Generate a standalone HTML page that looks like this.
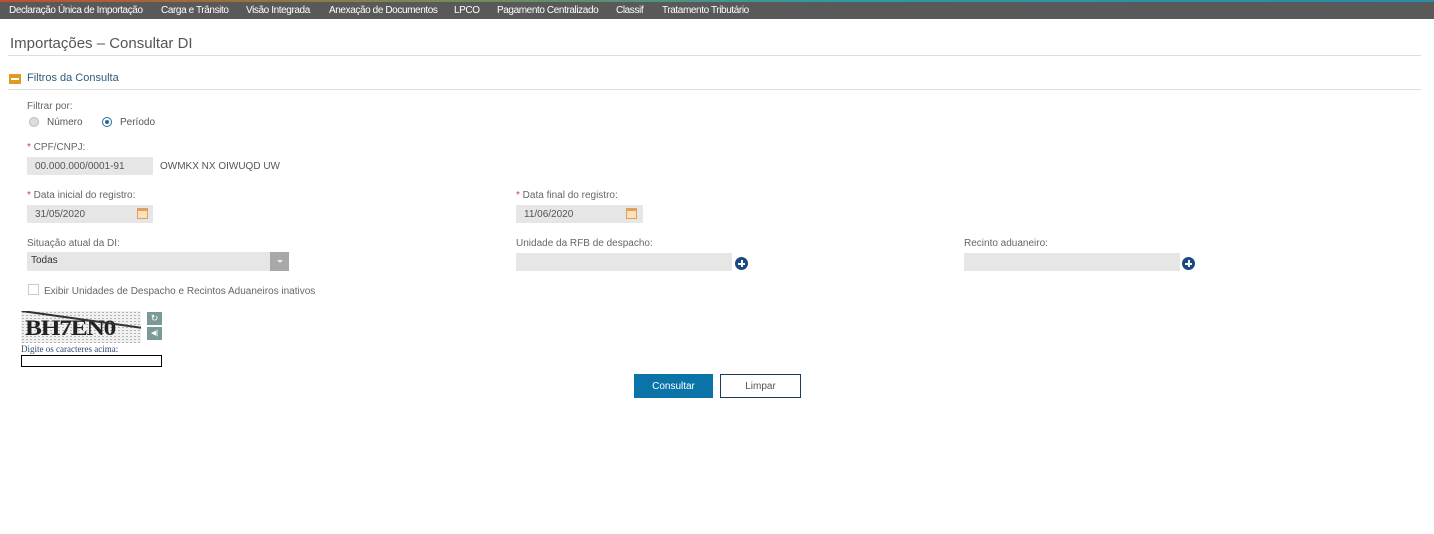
<!DOCTYPE html>
<html><head><meta charset="utf-8"><style>
*{margin:0;padding:0;box-sizing:border-box}
body{width:1434px;height:534px;background:#fff;position:relative;font-family:"Liberation Sans",sans-serif;color:#555;overflow:hidden}
.a{position:absolute;white-space:nowrap}
.nav{left:0;top:0;width:1434px;height:19px;background:#595959;border-top:2px solid;border-image:linear-gradient(90deg,#c0502a,#7a8a50 30%,#2a9aa8 60%,#2a8aa8) 1}
.nav span{position:absolute;top:3px;font-size:10px;color:#fff;letter-spacing:-0.4px}
.lbl{font-size:10px;color:#666}
.req{color:#d04040}
.inp{background:#e6e6e6}
.hl{height:1px;background:#ddd}
</style></head><body>
<div class="a nav">
<span style="left:9px">Declaração Única de Importação</span>
<span style="left:161px">Carga e Trânsito</span>
<span style="left:246px">Visão Integrada</span>
<span style="left:329px">Anexação de Documentos</span>
<span style="left:454px">LPCO</span>
<span style="left:497px">Pagamento Centralizado</span>
<span style="left:616px">Classif</span>
<span style="left:662px">Tratamento Tributário</span>
</div>
<div class="a" style="left:10px;top:35px;font-size:15px;color:#555">Importações – Consultar DI</div>
<div class="a hl" style="left:8px;top:55px;width:1413px"></div>
<div class="a" style="left:9px;top:74px;width:12px;height:10px;background:#e09a20"><div style="position:absolute;left:2px;top:4px;width:8px;height:2px;background:#fff"></div></div>
<div class="a" style="left:27px;top:72px;font-size:11px;color:#2e5b7a">Filtros da Consulta</div>
<div class="a hl" style="left:8px;top:89px;width:1413px"></div>

<div class="a lbl" style="left:27px;top:101px">Filtrar por:</div>
<div class="a" style="left:29px;top:117px;width:10px;height:10px;border-radius:50%;background:#ddd;border:1px solid #bbb"></div>
<div class="a lbl" style="left:47px;top:117px;color:#555">Número</div>
<div class="a" style="left:102px;top:117px;width:10px;height:10px;border-radius:50%;background:#fff;border:1px solid #2a6a9a"><div style="position:absolute;left:2px;top:2px;width:4px;height:4px;border-radius:50%;background:#2a6a9a"></div></div>
<div class="a lbl" style="left:120px;top:117px;color:#555">Período</div>

<div class="a lbl" style="left:27px;top:142px"><span class="req">*</span> CPF/CNPJ:</div>
<div class="a inp" style="left:27px;top:157px;width:126px;height:18px"></div>
<div class="a lbl" style="left:35px;top:161px;color:#555">00.000.000/0001-91</div>
<div class="a lbl" style="left:160px;top:161px;color:#555">OWMKX NX OIWUQD UW</div>

<div class="a lbl" style="left:27px;top:190px"><span class="req">*</span> Data inicial do registro:</div>
<div class="a inp" style="left:27px;top:205px;width:126px;height:18px"></div>
<div class="a lbl" style="left:35px;top:209px;color:#555">31/05/2020</div>
<div class="a" style="left:137px;top:208px;width:11px;height:11px;border:1px solid #e0a060;background:#fbe0b8;border-top:3px solid #e0a060"></div>

<div class="a lbl" style="left:516px;top:190px"><span class="req">*</span> Data final do registro:</div>
<div class="a inp" style="left:516px;top:205px;width:127px;height:18px"></div>
<div class="a lbl" style="left:524px;top:209px;color:#555">11/06/2020</div>
<div class="a" style="left:626px;top:208px;width:11px;height:11px;border:1px solid #e0a060;background:#fbe0b8;border-top:3px solid #e0a060"></div>

<div class="a lbl" style="left:27px;top:238px">Situação atual da DI:</div>
<div class="a inp" style="left:27px;top:252px;width:262px;height:19px"></div>
<div class="a" style="left:270px;top:252px;width:19px;height:19px;background:#a8a8a8"><div style="position:absolute;left:7px;top:8px;border-left:3px solid transparent;border-right:3px solid transparent;border-top:3px solid #eee"></div></div>
<div class="a" style="left:31px;top:255px;font-size:10px;color:#333">Todas</div>

<div class="a lbl" style="left:516px;top:238px">Unidade da RFB de despacho:</div>
<div class="a inp" style="left:516px;top:253px;width:216px;height:18px"></div>
<div class="a" style="left:735px;top:257px;width:13px;height:13px;border-radius:50%;background:#1a4a80"><div style="position:absolute;left:3px;top:5.5px;width:7px;height:2px;background:#fff"></div><div style="position:absolute;left:5.5px;top:3px;width:2px;height:7px;background:#fff"></div></div>

<div class="a lbl" style="left:964px;top:238px">Recinto aduaneiro:</div>
<div class="a inp" style="left:964px;top:253px;width:216px;height:18px"></div>
<div class="a" style="left:1182px;top:257px;width:13px;height:13px;border-radius:50%;background:#1a4a80"><div style="position:absolute;left:3px;top:5.5px;width:7px;height:2px;background:#fff"></div><div style="position:absolute;left:5.5px;top:3px;width:2px;height:7px;background:#fff"></div></div>

<div class="a" style="left:28px;top:284px;width:11px;height:11px;border:1px solid #ccc;background:#fff"></div>
<div class="a lbl" style="left:44px;top:286px">Exibir Unidades de Despacho e Recintos Aduaneiros inativos</div>

<div class="a" style="left:21px;top:311px;width:120px;height:32px;background:#f0f0f0;background-image:radial-gradient(#777 0.6px,transparent 0.8px);background-size:4px 3px;overflow:hidden">
<div style="position:absolute;left:4px;top:4px;font-family:'Liberation Serif',serif;font-weight:bold;font-size:22px;color:#222;letter-spacing:-1px;transform:scaleX(1.15);transform-origin:left">BH7EN0</div>
<div style="position:absolute;left:0;top:8px;width:130px;height:2px;background:#333;transform:rotate(8deg)"></div>
</div>
<div class="a" style="left:147px;top:312px;width:15px;height:13px;background:#7a9a98;color:#fff;font-size:9px;text-align:center;line-height:13px">↻</div>
<div class="a" style="left:147px;top:327px;width:15px;height:13px;background:#7a9a98;color:#fff;font-size:7px;text-align:center;line-height:13px">◀|</div>
<div class="a" style="left:21px;top:344px;font-family:'Liberation Serif',serif;font-size:9px;color:#2e4a6e">Digite os caracteres acima:</div>
<div class="a" style="left:21px;top:355px;width:141px;height:12px;border:1px solid #000"></div>

<div class="a" style="left:634px;top:374px;width:79px;height:24px;background:#0a74a8;color:#fff;font-size:10px;text-align:center;line-height:25px">Consultar</div>
<div class="a" style="left:720px;top:374px;width:81px;height:24px;border:1px solid #1c3a5a;color:#555;font-size:10px;text-align:center;line-height:23px">Limpar</div>
</body></html>
